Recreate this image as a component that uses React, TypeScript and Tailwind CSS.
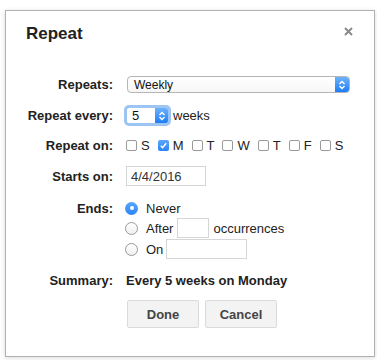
const days = [
  { d: "S", on: false },
  { d: "M", on: true },
  { d: "T", on: false },
  { d: "W", on: false },
  { d: "T", on: false },
  { d: "F", on: false },
  { d: "S", on: false },
];

const Chevrons = () => (
  <svg width="8" height="10" viewBox="0 0 8 10" fill="none" stroke="white" strokeWidth="1.4">
    <path d="M1.5 4 L4 1.5 L6.5 4" />
    <path d="M1.5 6 L4 8.5 L6.5 6" />
  </svg>
);

const Check = ({ on }: { on: boolean }) =>
  on ? (
    <span className="w-[11px] h-[11px] rounded-[2px] bg-gradient-to-b from-[#5aa6fb] to-[#2a85f5] flex items-center justify-center">
      <svg width="9" height="9" viewBox="0 0 9 9" fill="none" stroke="white" strokeWidth="1.5">
        <path d="M1.8 4.8 L3.6 6.6 L7.2 2.2" />
      </svg>
    </span>
  ) : (
    <span className="w-[11px] h-[11px] rounded-[2px] border border-[#9a9a9a] bg-white" />
  );

const Radio = ({ on }: { on: boolean }) =>
  on ? (
    <span className="w-[13px] h-[13px] rounded-full bg-gradient-to-b from-[#5aa6fb] to-[#2a85f5] flex items-center justify-center">
      <span className="w-[4px] h-[4px] rounded-full bg-white" />
    </span>
  ) : (
    <span className="w-[13px] h-[13px] rounded-full border border-[#9a9a9a] bg-gradient-to-b from-white to-[#f0f0f0]" />
  );

const Row = ({ label, h, mt, children }: { label: string; h: string; mt: string; children: React.ReactNode }) => (
  <div className={`grid grid-cols-[107px_1fr] gap-x-[13px] items-center ${h} ${mt}`}>
    <div className="text-right font-bold text-[#222]">{label}</div>
    <div className="flex items-center h-full">{children}</div>
  </div>
);

export default function App() {
  return (
    <div className="pt-[10px] pl-[5px] bg-white h-[360px] font-['Liberation_Sans',Arial,sans-serif] text-[13px] leading-none text-[#222]">
      <div className="w-[370px] h-[347px] border border-[#b0b0b0] bg-white shadow-[0_1px_5px_rgba(0,0,0,0.15)] pr-[24px]">
        <div className="flex justify-between items-start pt-[13px] pl-[20px] pr-[-3px]">
          <h1 className="text-[17px] leading-[20px] font-bold text-[#222]">Repeat</h1>
          <svg className="mt-[3px] mr-[-3px]" width="9" height="9" viewBox="0 0 9 9" stroke="#8a8a8a" strokeWidth="2">
            <path d="M1 1 L8 8 M8 1 L1 8" />
          </svg>
        </div>

        <Row label="Repeats:" h="h-[17px]" mt="mt-[32px]">
          <div className="ml-[1px] flex-1 h-[17px] flex border border-[#b5b5b5] rounded-[4px] overflow-hidden bg-gradient-to-b from-white to-[#f6f6f6]">
            <span className="flex-1 pl-[6px] text-[12px] flex items-center text-[#111]">Weekly</span>
            <span className="w-[14px] bg-gradient-to-b from-[#6cb1fb] to-[#1b7cf4] flex items-center justify-center">
              <Chevrons />
            </span>
          </div>
        </Row>

        <Row label="Repeat every:" h="h-[21px]" mt="mt-[12px]">
          <div className="ml-[-2px] h-[21px] w-[47px] rounded-[5px] bg-[#9cc5f4] p-[3px]">
            <div className="h-full flex bg-white rounded-[2px] overflow-hidden">
              <span className="flex-1 pl-[5px] flex items-center text-[13px] text-[#111]">5</span>
              <span className="w-[13px] bg-gradient-to-b from-[#6cb1fb] to-[#1b7cf4] flex items-center justify-center">
                <Chevrons />
              </span>
            </div>
          </div>
          <span className="ml-[2px]">weeks</span>
        </Row>

        <Row label="Repeat on:" h="h-[14px]" mt="mt-[12px]">
          <div className="flex items-center gap-[8px]">
            {days.map((x, i) => (
              <span key={i} className="flex items-center gap-[4px]">
                <Check on={x.on} />
                <span>{x.d}</span>
              </span>
            ))}
          </div>
        </Row>

        <Row label="Starts on:" h="h-[20px]" mt="mt-[14px]">
          <div className="w-[80px] h-[20px] border border-[#d6d6d6] pl-[4px] flex items-center text-[#333]">4/4/2016</div>
        </Row>

        <div className="grid grid-cols-[107px_1fr] gap-x-[13px] mt-[15px]">
          <div className="text-right font-bold h-[14px] flex items-center justify-end">Ends:</div>
          <div className="flex flex-col ml-[-1px]">
            <div className="h-[14px] flex items-center gap-[8px]">
              <Radio on={true} />
              <span>Never</span>
            </div>
            <div className="h-[20px] mt-[3px] flex items-center">
              <Radio on={false} />
              <span className="ml-[8px]">After</span>
              <span className="ml-[4px] w-[32px] h-[20px] border border-[#d6d6d6]" />
              <span className="ml-[4px]">occurrences</span>
            </div>
            <div className="h-[20px] mt-[1px] flex items-center">
              <Radio on={false} />
              <span className="ml-[8px]">On</span>
              <span className="ml-[3px] w-[81px] h-[20px] border border-[#d6d6d6]" />
            </div>
          </div>
        </div>

        <Row label="Summary:" h="h-[16px]" mt="mt-[13px]">
          <span className="font-bold">Every 5 weeks on Monday</span>
        </Row>

        <div className="grid grid-cols-[107px_1fr] gap-x-[13px] mt-[12px]">
          <div />
          <div className="flex gap-[6px] ml-[1px]">
            <button className="w-[72px] h-[28px] rounded-[2px] border border-[#dadada] bg-[#f3f3f3] font-bold text-[#444]">Done</button>
            <button className="w-[72px] h-[28px] rounded-[2px] border border-[#dadada] bg-[#f3f3f3] font-bold text-[#444]">Cancel</button>
          </div>
        </div>
      </div>
    </div>
  );
}
